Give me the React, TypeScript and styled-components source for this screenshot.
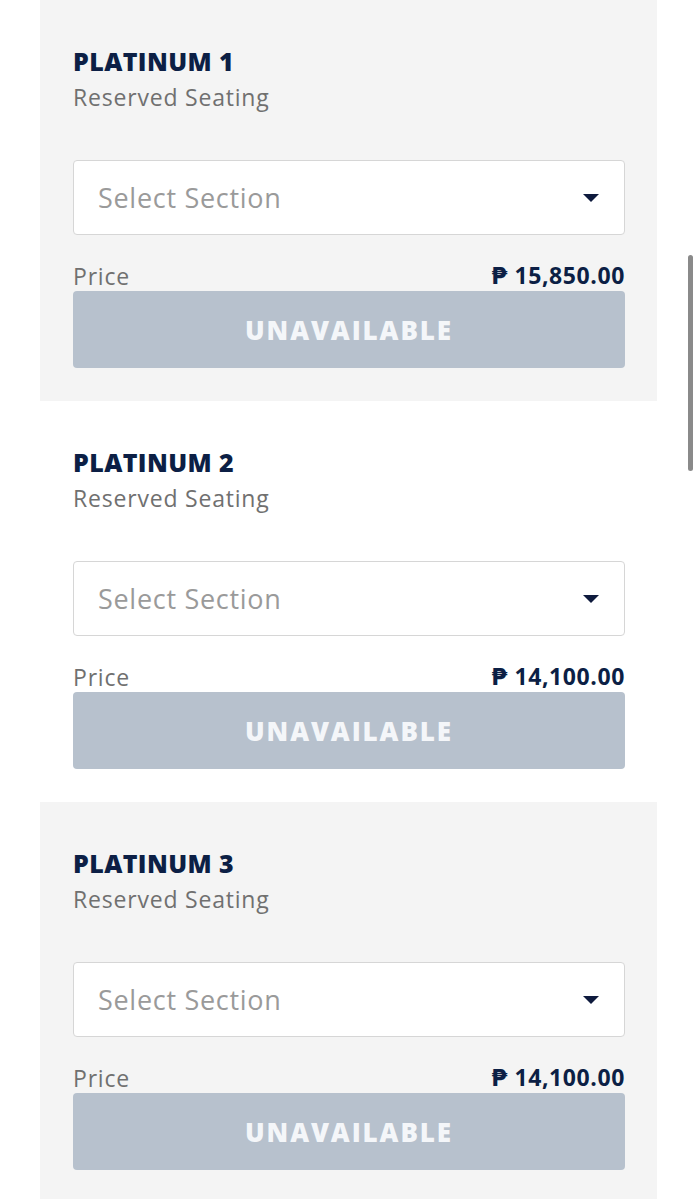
import React from "react";
import styled, { createGlobalStyle } from "styled-components";

interface Tier {
  name: string;
  price: string;
}

const tiers: Tier[] = [
  { name: "PLATINUM 1", price: "15,850.00" },
  { name: "PLATINUM 2", price: "14,100.00" },
  { name: "PLATINUM 3", price: "14,100.00" },
];

const GlobalStyle = createGlobalStyle`
  html, body {
    margin: 0;
    padding: 0;
    background: #ffffff;
    overflow: hidden;
  }
  body {
    font-family: "Open Sans", "DejaVu Sans", sans-serif;
  }
`;

const App: React.FC = () => {
  return (
    <Page>
      <GlobalStyle />
      <List>
        {tiers.map((tier, key) => (
          <Card key={key} $shaded={key % 2 === 0}>
            <Title>{tier.name}</Title>
            <Subtitle>Reserved Seating</Subtitle>
            <Select>
              <span>Select Section</span>
              <Caret />
            </Select>
            <PriceRow>
              <span className="label">Price</span>
              <span className="value">
                <span className="peso">₱</span> {tier.price}
              </span>
            </PriceRow>
            <Button>UNAVAILABLE</Button>
          </Card>
        ))}
      </List>
      <Scrollbar />
    </Page>
  );
};

const Page = styled.div`
  width: 698px;
  height: 1199px;
  overflow: hidden;
  background: #ffffff;
`;

const List = styled.div`
  display: flex;
  flex-direction: column;
  padding-left: 40px;
`;

const Card = styled.section<{ $shaded: boolean }>`
  width: 617px;
  height: 401px;
  box-sizing: border-box;
  padding: 45px 32px 0 33px;
  display: flex;
  flex-direction: column;
  background: ${(p) => (p.$shaded ? "#f4f4f4" : "#ffffff")};
`;

const Title = styled.h2`
  margin: 0;
  font-size: 25px;
  line-height: 32px;
  font-weight: 800;
  color: #0c1f45;
  letter-spacing: 0.4px;
`;

const Subtitle = styled.div`
  margin-top: 7px;
  font-size: 23px;
  line-height: 26px;
  font-weight: 400;
  color: #707070;
  letter-spacing: 0.8px;
`;

const Select = styled.div`
  margin-top: 50px;
  height: 75px;
  box-sizing: border-box;
  border: 1px solid #d6d6d6;
  border-radius: 4px;
  background: #ffffff;
  display: flex;
  align-items: center;
  justify-content: space-between;
  padding: 0 25px 0 24px;
  font-size: 27px;
  letter-spacing: 0.7px;
  color: #9a9a9a;
`;

const Caret = styled.span`
  width: 0;
  height: 0;
  border-left: 8px solid transparent;
  border-right: 8px solid transparent;
  border-top: 8px solid #0e1a3d;
`;

const PriceRow = styled.div`
  margin-top: 27px;
  height: 28px;
  display: flex;
  align-items: flex-end;
  justify-content: space-between;
  .label {
    font-size: 23px;
    line-height: 28px;
    letter-spacing: 0.8px;
    color: #707070;
  }
  .value {
    font-size: 23px;
    line-height: 28px;
    font-weight: 700;
    letter-spacing: 0.6px;
    color: #0c1f45;
  }
  .peso {
    font-family: "DejaVu Sans", sans-serif;
  }
`;

const Button = styled.button`
  margin-top: 1px;
  height: 77px;
  width: 100%;
  border: none;
  border-radius: 4px;
  background: #b7c1cd;
  color: #f4f6f9;
  font-family: "Open Sans", "DejaVu Sans", sans-serif;
  font-size: 26px;
  font-weight: 800;
  letter-spacing: 1.9px;
`;

const Scrollbar = styled.div`
  position: fixed;
  top: 255px;
  left: 688px;
  width: 5px;
  height: 216px;
  border-radius: 3px;
  background: #8a8a8a;
`;

export default App;
